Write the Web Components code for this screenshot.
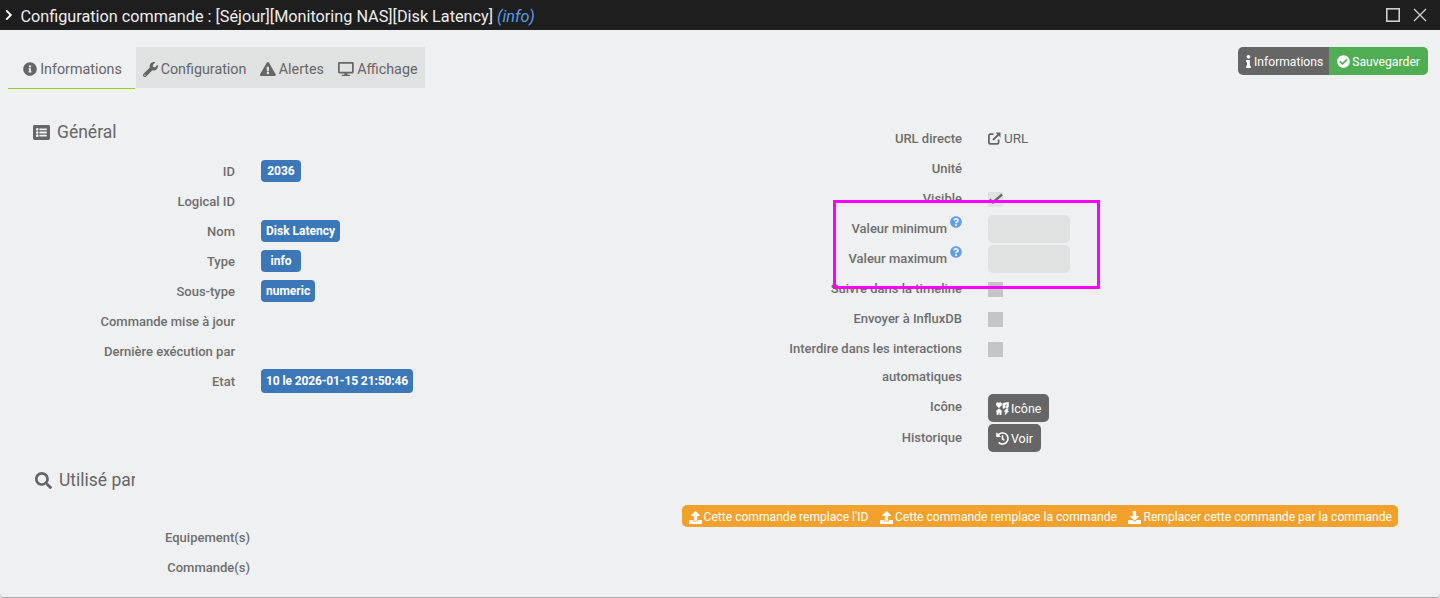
<!DOCTYPE html>
<html lang="fr">
<head>
<meta charset="utf-8">
<title>Configuration commande</title>
<style>
  html, body { margin: 0; height: 100%; overflow: hidden; background: #eff0f2; }
  body { font-family: Roboto, "Liberation Sans", sans-serif; }
</style>
</head>
<body>
<cmd-dialog>
  <dialog-title slot="title"></dialog-title>
  <tab-bar slot="tabs"></tab-bar>
  <div slot="actions" style="display:flex">
    <fa-btn color="#666666" size="12.1" radius="5px 0 0 5px" pad="1px 6px 0 8px" icon="info">Informations</fa-btn>
    <fa-btn color="#4fae54" size="12.2" radius="0 5px 5px 0" pad="1px 8px 0" gap="2" icon="check">Sauvegarder</fa-btn>
  </div>

  <form-col slot="left" style="padding-top:32px">
    <sec-title icon="list">Général</sec-title>
    <div style="height:14px"></div>
    <form-row label="ID" lw="203"><val-badge min="40">2036</val-badge></form-row>
    <form-row label="Logical ID" lw="203"></form-row>
    <form-row label="Nom" lw="203"><val-badge>Disk Latency</val-badge></form-row>
    <form-row label="Type" lw="203"><val-badge min="40">info</val-badge></form-row>
    <form-row label="Sous-type" lw="203"><val-badge>numeric</val-badge></form-row>
    <form-row label="Commande mise à jour" lw="203"></form-row>
    <form-row label="Dernière exécution par" lw="203"></form-row>
    <form-row label="Etat" lw="203"><val-badge tall>10 le 2026-01-15 21:50:46</val-badge></form-row>
  </form-col>

  <form-col slot="right" style="padding-top:33px">
    <form-row label="URL directe" lw="242"><link-url>URL</link-url></form-row>
    <form-row label="Unité" lw="242"></form-row>
    <form-row label="Visible" lw="242"><fake-check checked></fake-check></form-row>
    <form-row label="Valeur minimum" lw="242" help><fake-input></fake-input></form-row>
    <form-row label="Valeur maximum" lw="242" help><fake-input></fake-input></form-row>
    <form-row label="Suivre dans la timeline" lw="242"><fake-check></fake-check></form-row>
    <form-row label="Envoyer à InfluxDB" lw="242"><fake-check></fake-check></form-row>
    <form-row label="Interdire dans les interactions" lw="242"><fake-check></fake-check></form-row>
    <form-row label="automatiques" lw="242" h="27"></form-row>
    <form-row label="Icône" lw="242" h="32"><fa-btn color="#666666" size="12.4" radius="5px" pad="0 8px" gap="2" h="28" style="margin-top:4px" icon="icons">Icône</fa-btn></form-row>
    <form-row label="Historique" lw="242"><fa-btn color="#666666" size="12.4" radius="5px" pad="0 8px" gap="2" h="28" style="margin-top:2px" icon="history">Voir</fa-btn></form-row>
  </form-col>

  <form-col slot="used" style="padding-top:7px">
    <sec-title icon="search" clip>Utilisé par</sec-title>
  </form-col>

  <div slot="orange" style="display:flex;background:#f2a12c;border-radius:5px;height:22px;box-sizing:border-box;padding:2px 6px 0 7px;gap:11.5px;align-items:center">
    <orange-link icon="upload">Cette commande remplace l'ID</orange-link>
    <orange-link icon="upload">Cette commande remplace la commande</orange-link>
    <orange-link icon="download">Remplacer cette commande par la commande</orange-link>
  </div>

  <form-col slot="used-rows">
    <form-row label="Equipement(s)" lw="250"></form-row>
    <form-row label="Commande(s)" lw="250"></form-row>
  </form-col>
</cmd-dialog>
<focus-frame></focus-frame>

<script>
const ICONS = {
  circleinfo: ['0 0 512 512', 'M256 8C119 8 8 119.1 8 256c0 137 111 248 248 248s248-111 248-248C504 119.1 393 8 256 8zm0 110c23.2 0 42 18.8 42 42s-18.8 42-42 42-42-18.8-42-42 18.8-42 42-42zm56 254c0 6.6-5.4 12-12 12h-88c-6.6 0-12-5.4-12-12v-24c0-6.6 5.4-12 12-12h12v-64h-12c-6.6 0-12-5.4-12-12v-24c0-6.6 5.4-12 12-12h64c6.6 0 12 5.4 12 12v100h12c6.6 0 12 5.4 12 12v24z'],
  wrench: ['0 0 512 512', 'M507.73 109.1c-2.24-9.03-13.54-12.09-20.12-5.51l-74.36 74.36-67.88-11.31-11.31-67.88 74.36-74.36c6.62-6.62 3.43-17.9-5.66-20.16-47.38-11.74-99.55.91-136.58 37.93-39.64 39.64-50.55 97.1-34.05 147.2L18.74 402.76c-24.99 24.99-24.99 65.51 0 90.5 24.99 24.99 65.51 24.99 90.5 0l213.21-213.21c50.12 16.71 107.47 5.68 147.37-34.22 37.07-37.07 49.7-89.32 37.91-136.73zM64 472c-13.25 0-24-10.75-24-24 0-13.26 10.75-24 24-24s24 10.74 24 24c0 13.25-10.75 24-24 24z'],
  warning: ['0 0 576 512', 'M569.517 440.013C587.975 472.007 564.806 512 527.94 512H48.054c-36.937 0-59.999-40.055-41.577-71.987L246.423 23.985c18.467-32.009 64.72-31.951 83.154 0l239.94 416.028zM288 354c-25.405 0-46 20.595-46 46s20.595 46 46 46 46-20.595 46-46-20.595-46-46-46zm-43.673-165.346l7.418 136c.347 6.364 5.609 11.346 11.982 11.346h48.546c6.373 0 11.635-4.982 11.982-11.346l7.418-136c.375-6.874-5.098-12.654-11.982-12.654h-63.383c-6.884 0-12.356 5.78-11.981 12.654z'],
  desktop: ['0 0 576 512', 'M528 0H48C21.5 0 0 21.5 0 48v320c0 26.5 21.5 48 48 48h192l-16 48h-72c-13.3 0-24 10.7-24 24s10.7 24 24 24h272c13.3 0 24-10.7 24-24s-10.7-24-24-24h-72l-16-48h192c26.5 0 48-21.5 48-48V48c0-26.5-21.5-48-48-48zm-16 352H64V64h448v288z'],
  list: ['0 0 512 512', 'M464 480H48c-26.51 0-48-21.49-48-48V80c0-26.51 21.49-48 48-48h416c26.51 0 48 21.49 48 48v352c0 26.51-21.49 48-48 48zM128 120c-22.091 0-40 17.909-40 40s17.909 40 40 40 40-17.909 40-40-17.909-40-40-40zm0 96c-22.091 0-40 17.909-40 40s17.909 40 40 40 40-17.909 40-40-17.909-40-40-40zm0 96c-22.091 0-40 17.909-40 40s17.909 40 40 40 40-17.909 40-40-17.909-40-40-40zm288-136v-32c0-6.627-5.373-12-12-12H204c-6.627 0-12 5.373-12 12v32c0 6.627 5.373 12 12 12h200c6.627 0 12-5.373 12-12zm0 96v-32c0-6.627-5.373-12-12-12H204c-6.627 0-12 5.373-12 12v32c0 6.627 5.373 12 12 12h200c6.627 0 12-5.373 12-12zm0 96v-32c0-6.627-5.373-12-12-12H204c-6.627 0-12 5.373-12 12v32c0 6.627 5.373 12 12 12h200c6.627 0 12-5.373 12-12z'],
  search: ['0 0 512 512', 'M505 442.7L405.3 343c-4.5-4.5-10.6-7-17-7H372c27.6-35.3 44-79.7 44-128C416 93.1 322.9 0 208 0S0 93.1 0 208s93.1 208 208 208c48.3 0 92.7-16.4 128-44v16.3c0 6.4 2.5 12.5 7 17l99.7 99.7c9.4 9.4 24.6 9.4 33.9 0l28.3-28.3c9.4-9.4 9.4-24.6.1-34zM208 336c-70.7 0-128-57.2-128-128 0-70.7 57.2-128 128-128 70.7 0 128 57.2 128 128 0 70.7-57.2 128-128 128z'],
  check: ['0 0 512 512', 'M504 256c0 136.967-111.033 248-248 248S8 392.967 8 256 119.033 8 256 8s248 111.033 248 248zM227.314 387.314l184-184c6.248-6.248 6.248-16.379 0-22.627l-22.627-22.627c-6.248-6.249-16.379-6.25-22.628 0L216 308.118l-70.059-70.059c-6.248-6.248-16.379-6.248-22.628 0l-22.627 22.627c-6.248 6.248-6.248 16.379 0 22.627l104 104c6.249 6.249 16.379 6.249 22.628.001z'],
  info: ['0 0 192 512', 'M20 424.229h20V279.771H20c-11.046 0-20-8.954-20-20V212c0-11.046 8.954-20 20-20h112c11.046 0 20 8.954 20 20v212.229h20c11.046 0 20 8.954 20 20V492c0 11.046-8.954 20-20 20H20c-11.046 0-20-8.954-20-20v-47.771c0-11.046 8.954-20 20-20zM96 0C56.235 0 24 32.235 24 72s32.235 72 72 72 72-32.235 72-72S135.764 0 96 0z'],
  question: ['0 0 512 512', 'M504 256c0 136.997-111.043 248-248 248S8 392.997 8 256C8 119.083 119.043 8 256 8s248 111.083 248 248zM262.655 90c-54.497 0-89.255 22.957-116.549 63.758-3.536 5.286-2.353 12.415 2.715 16.258l34.699 26.31c5.205 3.947 12.621 3.008 16.665-2.122 17.864-22.658 30.113-35.797 57.303-35.797 20.429 0 45.698 13.148 45.698 32.958 0 14.976-12.363 22.667-32.534 33.976C247.128 238.528 216 254.941 216 296v4c0 6.627 5.373 12 12 12h56c6.627 0 12-5.373 12-12v-1.333c0-28.462 83.186-29.647 83.186-106.667 0-58.002-60.165-102-116.531-102zM256 338c-25.365 0-46 20.635-46 46 0 25.364 20.635 46 46 46s46-20.636 46-46c0-25.365-20.635-46-46-46z'],
  history: ['0 0 512 512', 'M504 255.531c.253 136.64-111.18 248.372-247.82 248.468-59.015.042-113.223-20.53-155.822-54.911-11.077-8.94-11.905-25.541-1.839-35.607l11.267-11.267c8.609-8.609 22.353-9.551 31.891-1.984C173.062 425.135 212.781 440 256 440c101.705 0 184-82.311 184-184 0-101.705-82.311-184-184-184-48.814 0-93.149 18.969-126.068 49.932l50.754 50.754c10.08 10.08 2.941 27.314-11.313 27.314H24c-8.837 0-16-7.163-16-16V38.627c0-14.254 17.234-21.393 27.314-11.314l49.372 49.372C129.209 34.136 189.552 8 256 8c136.81 0 247.747 110.78 248 247.531zm-180.912 78.784l9.823-12.63c8.138-10.463 6.253-25.542-4.21-33.679L288 256.349V152c0-13.255-10.745-24-24-24h-16c-13.255 0-24 10.745-24 24v135.651l65.409 50.874c10.463 8.137 25.541 6.253 33.679-4.21z'],
  upload: ['0 0 512 512', 'M296 384h-80c-13.3 0-24-10.7-24-24V192h-87.7c-17.8 0-26.7-21.5-14.1-34.1L242.3 5.7c7.5-7.5 19.8-7.5 27.3 0l152.2 152.2c12.6 12.6 3.7 34.1-14.1 34.1H320v168c0 13.3-10.7 24-24 24zm216-8v112c0 13.3-10.7 24-24 24H24c-13.3 0-24-10.7-24-24V376c0-13.3 10.7-24 24-24h136v8c0 30.9 25.1 56 56 56h80c30.9 0 56-25.1 56-56v-8h136c13.3 0 24 10.7 24 24z'],
  download: ['0 0 512 512', 'M216 0h80c13.3 0 24 10.7 24 24v168h87.7c17.8 0 26.7 21.5 14.1 34.1L269.7 378.3c-7.5 7.5-19.8 7.5-27.3 0L90.1 226.1c-12.6-12.6-3.7-34.1 14.1-34.1H192V24c0-13.3 10.7-24 24-24zm296 376v112c0 13.3-10.7 24-24 24H24c-13.3 0-24-10.7-24-24V376c0-13.3 10.7-24 24-24h146.7l49 49c20.1 20.1 52.5 20.1 72.6 0l49-49H488c13.3 0 24 10.7 24 24z'],
  chevron: ['0 0 320 512', 'M285.476 272.971L91.132 467.314c-9.373 9.373-24.569 9.373-33.941 0l-22.667-22.667c-9.357-9.357-9.375-24.522-.04-33.901L188.505 256 34.484 101.255c-9.335-9.379-9.317-24.544.04-33.901l22.667-22.667c9.373-9.373 24.569-9.373 33.941 0L285.475 239.03c9.373 9.372 9.373 24.568.001 33.941z'],
  icons: ['0 0 512 512', 'M116 232 14 128C-18 92 10 18 62 18c24 0 42 12 54 30 12-18 30-30 54-30 52 0 80 74 48 110zM496 10v168c0 34-30 54-62 54s-58-20-58-48 30-50 66-44V86l-90 18v100c0 30-30 50-60 50-8 0-14-2-20-4V50zM120 262l120 104h-34v136h-62v-78H92v78H34V366H0zM404 262h80l-42 90h60L354 512l34-124h-68z']
};

function icon(name, h, extra = '') {
  const [vb, d] = ICONS[name];
  const [, , w, vh] = vb.split(' ').map(Number);
  const thick = name === 'icons' ? 'stroke="currentColor" stroke-width="18"' : '';
  return `<svg viewBox="${vb}" width="${(h * w / vh).toFixed(2)}" height="${h}" fill="currentColor" ${thick} style="flex:none;display:block;${extra}"><path d="${d}"/></svg>`;
}

class CmdDialog extends HTMLElement {
  constructor() {
    super();
    this.attachShadow({mode: 'open'}).innerHTML = `
      <style>
        :host { display: flex; flex-direction: column; width: 1440px; height: 598px; overflow: hidden; background: #eff0f2; color: #6b6b6b; box-sizing: border-box; border-bottom: 1px solid #a9a9a9; border-radius: 0 0 4px 4px; }
        .body { flex: 1; min-height: 0; display: flex; flex-direction: column; overflow: hidden; }
        .top { display: flex; justify-content: space-between; align-items: flex-start; padding: 17px 12px 0 8px; height: 43px; }
        .form { display: flex; height: 373px; }
        .left { width: 720px; flex: none; }
        .right { flex: 1; }
        .used { height: 40px; }
        .orange { display: flex; justify-content: flex-end; padding: 0 42px 0 0; height: 22px; margin-top: 2px; }
        .rows { margin-top: -5px; }
      </style>
      <slot name="title"></slot>
      <div class="body">
        <div class="top"><slot name="tabs"></slot><div><slot name="actions"></slot></div></div>
        <div class="form">
          <div class="left"><slot name="left"></slot></div>
          <div class="right"><slot name="right"></slot></div>
        </div>
        <div class="used"><slot name="used"></slot></div>
        <div class="orange"><slot name="orange"></slot></div>
        <div class="rows"><slot name="used-rows"></slot></div>
      </div>`;
  }
}

class DialogTitle extends HTMLElement {
  constructor() {
    super();
    this.attachShadow({mode: 'open'}).innerHTML = `
      <style>
        :host { display: flex; align-items: center; height: 30px; flex: none; background: #1e1e1e; color: #eeeeee; font-size: 16.23px; padding: 2px 13px 0 5px; box-sizing: border-box; }
        .t { margin-left: 8px; flex: 1; white-space: nowrap; }
        i { color: #5b9be6; }
        .c { color: #fff; display: block; margin-top: -2px; }
        .btns { display: flex; gap: 13px; align-items: center; color: #cfcfcf; margin-top: -2px; }
      </style>
      <span class="c">${icon('chevron', 12)}</span>
      <span class="t">Configuration commande : [Séjour][Monitoring NAS][Disk Latency] <i>(info)</i></span>
      <span class="btns">
        <svg width="14" height="14" viewBox="0 0 14 14" fill="none" stroke="currentColor" stroke-width="1.6"><rect x=".8" y=".8" width="12.4" height="12.4"/></svg>
        <svg width="14" height="14" viewBox="0 0 14 14" fill="none" stroke="currentColor" stroke-width="1.3"><path d="M1 1l12 12M13 1L1 13"/></svg>
      </span>`;
  }
}

class TabBar extends HTMLElement {
  constructor() {
    super();
    const tabs = [['circleinfo', 'Informations', 14, 127], ['wrench', 'Configuration', 15, 117], ['warning', 'Alertes', 14, 78], ['desktop', 'Affichage', 14, 94]];
    this.attachShadow({mode: 'open'}).innerHTML = `
      <style>
        :host { display: flex; height: 43px; font-size: 14.3px; color: #666666; }
        .tab { display: flex; align-items: center; justify-content: center; gap: 3px; box-sizing: border-box; height: 41px; padding-top: 3px; background: #e0e1e1; white-space: nowrap; }
        .tab.on { background: transparent; height: 42px; padding-left: 2px; border-bottom: 1px solid #95d01a; margin-right: 1px; }
      </style>
      ${tabs.map((t, i) => `<div class="tab ${i === 0 ? 'on' : ''}" style="width:${t[3]}px">${icon(t[0], t[2])}<span>${t[1]}</span></div>`).join('')}`;
  }
}

class FaBtn extends HTMLElement {
  constructor() {
    super();
    const a = n => this.getAttribute(n);
    this.attachShadow({mode: 'open'}).innerHTML = `
      <style>
        :host { display: inline-flex; align-items: center; gap: ${a('gap') || 3}px; height: ${a('h') || 28}px; background: ${a('color')}; color: #fff; border-radius: ${a('radius')}; padding: ${a('pad')}; font-size: ${a('size')}px; font-weight: 400; box-sizing: border-box; white-space: nowrap; }
      </style>
      ${icon(a('icon'), 13)}<slot></slot>`;
  }
}

class SecTitle extends HTMLElement {
  constructor() {
    super();
    const name = this.getAttribute('icon');
    this.attachShadow({mode: 'open'}).innerHTML = `
      <style>
        :host { display: flex; align-items: center; gap: 7px; margin-left: 33px; height: 20px; font-size: 17.5px; color: #666666; line-height: 20px; white-space: nowrap; }
        .clip { max-width: 76px; overflow: hidden; }
      </style>
      <span style="margin-left:${name === 'search' ? 2 : 0}px">${icon(name, 17)}</span><span class="${this.hasAttribute('clip') ? 'clip' : ''}"><slot></slot></span>`;
  }
}

class FormCol extends HTMLElement {
  constructor() {
    super();
    this.attachShadow({mode: 'open'}).innerHTML = `<style>:host { display: block; }</style><slot></slot>`;
  }
}

class FormRow extends HTMLElement {
  constructor() {
    super();
    const w = +this.getAttribute('lw') + (this.getAttribute('lw') === '203' ? 32 : 0);
    const help = this.hasAttribute('help');
    this.attachShadow({mode: 'open'}).innerHTML = `
      <style>
        :host { display: flex; height: ${this.getAttribute('h') || 30}px; align-items: center; font-size: 13px; font-weight: 500; color: #6e6e6e; white-space: nowrap; }
        .l { width: ${w}px; flex: none; text-align: right; display: flex; justify-content: flex-end; align-items: center; }
        .q { color: #5f9ee8; margin: -12px 0 0 3px; }
        .v { margin-left: 26px; display: flex; align-items: center; }
      </style>
      <div class="l"><span>${this.getAttribute('label')}</span>${help ? `<span class="q">${icon('question', 12)}</span>` : ''}</div>
      <div class="v"><slot></slot></div>`;
  }
}

class ValBadge extends HTMLElement {
  constructor() {
    super();
    const tall = this.hasAttribute('tall');
    this.attachShadow({mode: 'open'}).innerHTML = `
      <style>
        :host { display: inline-flex; justify-content: center; align-items: center; height: ${tall ? 24 : 22}px; min-width: ${this.getAttribute('min') || 0}px; padding: 0 5px; box-sizing: border-box; background: #3c78b8; color: #fff; border-radius: 4px; font-size: 12px; font-weight: 700; margin-top: -1px; letter-spacing: ${tall ? '-.12px' : '0'}; }
      </style><slot></slot>`;
  }
}

class LinkUrl extends HTMLElement {
  constructor() {
    super();
    this.attachShadow({mode: 'open'}).innerHTML = `
      <style>:host { display: inline-flex; align-items: center; gap: 3px; font-size: 13.5px; font-weight: 400; color: #666666; }</style>
      <svg width="13" height="13" viewBox="0 0 13 13" fill="none" stroke="currentColor" stroke-width="1.8"><path d="M10.600 7.500v3a1.400 1.400 0 0 1-1.400 1.400H2.200A1.400 1.400 0 0 1 .9 10.500V3.500A1.400 1.400 0 0 1 2.200 2.100H5.500"/><path d="M5 8 11 2"/><path d="M7.500.6h5v5z" fill="currentColor" stroke="none"/></svg>
      <slot></slot>`;
  }
}

class FakeCheck extends HTMLElement {
  constructor() {
    super();
    const on = this.hasAttribute('checked');
    this.attachShadow({mode: 'open'}).innerHTML = `
      <style>:host { display: block; width: 15px; height: 15px; background: ${on ? '#e0e1e1' : '#c5c5c5'}; margin-top: 3px; }</style>
      ${on ? '<svg width="15" height="15" viewBox="0 0 15 15" fill="none" stroke="#6a6a6a" stroke-width="2.400"><path d="M1.500 7.500 5 10.500 14 2.500"/></svg>' : ''}`;
  }
}

class FakeInput extends HTMLElement {
  constructor() {
    super();
    this.attachShadow({mode: 'open'}).innerHTML = `<style>:host { display: block; width: 82px; height: 28px; background: #e0e1e1; border-radius: 5px; margin-top: 2px; }</style>`;
  }
}

class OrangeLink extends HTMLElement {
  constructor() {
    super();
    this.attachShadow({mode: 'open'}).innerHTML = `
      <style>:host { display: inline-flex; align-items: center; gap: 2px; color: #fff; font-size: 12.1px; font-weight: 400; white-space: nowrap; }</style>
      ${icon(this.getAttribute('icon'), 13)}<slot></slot>`;
  }
}

class FocusFrame extends HTMLElement {
  constructor() {
    super();
    this.attachShadow({mode: 'open'}).innerHTML = `<style>:host { position: absolute; left: 833px; top: 200px; width: 267px; height: 89px; box-sizing: border-box; border: 3px solid #f0f; }</style>`;
  }
}

customElements.define('cmd-dialog', CmdDialog);
customElements.define('dialog-title', DialogTitle);
customElements.define('tab-bar', TabBar);
customElements.define('fa-btn', FaBtn);
customElements.define('sec-title', SecTitle);
customElements.define('form-col', FormCol);
customElements.define('form-row', FormRow);
customElements.define('val-badge', ValBadge);
customElements.define('link-url', LinkUrl);
customElements.define('fake-check', FakeCheck);
customElements.define('fake-input', FakeInput);
customElements.define('orange-link', OrangeLink);
customElements.define('focus-frame', FocusFrame);
</script>
</body>
</html>
